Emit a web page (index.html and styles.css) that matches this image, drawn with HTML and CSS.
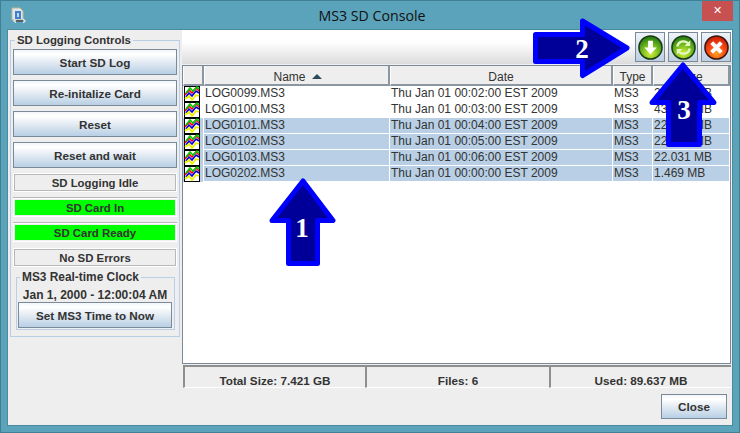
FILE: index.html
```html
<!DOCTYPE html>
<html lang="en">
<head>
<meta charset="utf-8">
<title>MS3 SD Console</title>
<link rel="stylesheet" href="styles.css">
</head>
<body>
<svg class="defs" width="0" height="0" aria-hidden="true">
  <defs>
    <radialGradient id="gGreen" cx="50%" cy="75%" r="75%">
      <stop offset="0" stop-color="#d8f03c"/><stop offset=".45" stop-color="#7cc020"/><stop offset="1" stop-color="#1c7410"/>
    </radialGradient>
    <radialGradient id="gRed" cx="50%" cy="75%" r="75%">
      <stop offset="0" stop-color="#ffa020"/><stop offset=".5" stop-color="#f84a10"/><stop offset="1" stop-color="#c81808"/>
    </radialGradient>
    <symbol id="chart" viewBox="0 0 16 16">
      <rect x=".5" y=".5" width="15" height="15" fill="#fff" stroke="#000"/>
      <path d="M1 9 5 4 8 7 12 2 15 5" fill="none" stroke="#f00" stroke-width="1.6"/>
      <path d="M2 7 6 2 9 5 13 1 15 3" fill="none" stroke="#0c0" stroke-width="1.6"/>
      <path d="M2 11 5 7 8 10 12 5 15 7" fill="none" stroke="#00d" stroke-width="1.6"/>
      <path d="M1 13 5 10 8 14 12 9 15 10" fill="none" stroke="#ee0" stroke-width="1.8"/>
    </symbol>
  </defs>
</svg>

<div class="window">
  <header class="titlebar">
    <svg class="app-icon" width="15" height="16" viewBox="0 0 15 16" aria-hidden="true">
      <path d="M1 1h8l3 3v9H1z" fill="#dfe6ee" stroke="#c2b68a"/>
      <rect x="4" y="4" width="6" height="8" fill="#3f7fd0"/>
      <path d="M6 6h2v4H6z" fill="#bcd8f4"/>
      <path d="M5 14h7" stroke="#55616a" stroke-width="2"/>
      <path d="M12 12l2 2-2 2" stroke="#dfe4e8" fill="none" stroke-width="1.4"/>
      <path d="M5 12.4l-2 1.6 2 1.6" stroke="#dfe4e8" fill="none" stroke-width="1.4"/>
    </svg>
    <div class="title">MS3 SD Console</div>
    <button class="win-close" type="button">✕</button>
  </header>

  <main class="client">
    <aside class="left">
      <fieldset class="group">
        <legend>SD Logging Controls</legend>
        <div class="stack">
          <button class="btn" type="button">Start SD Log</button>
          <button class="btn" type="button">Re-initalize Card</button>
          <button class="btn" type="button">Reset</button>
          <button class="btn" type="button">Reset and wait</button>
          <div class="labels">
            <div class="status">SD Logging Idle</div>
            <div class="status on">SD Card In</div>
            <div class="status on">SD Card Ready</div>
            <div class="status">No SD Errors</div>
          </div>
        </div>
        <fieldset class="group clock">
          <legend>MS3 Real-time Clock</legend>
          <div class="time">Jan 1, 2000 - 12:00:04 AM</div>
          <button class="btn" type="button">Set MS3 Time to Now</button>
        </fieldset>
      </fieldset>
    </aside>

    <section class="right">
      <div class="toolbar">
        <button class="tool" type="button" aria-label="Download">
          <svg width="25" height="25" viewBox="0 0 26 26"><circle cx="13" cy="13" r="12" fill="url(#gGreen)" stroke="#1a3a16" stroke-width="1.6"/><path d="M10.5 6h5v7h4L13 20l-6.500-7h4z" fill="#fff"/></svg>
        </button>
        <button class="tool" type="button" aria-label="Refresh">
          <svg width="25" height="25" viewBox="0 0 26 26"><circle cx="13" cy="13" r="12" fill="url(#gGreen)" stroke="#1a3a16" stroke-width="1.6"/><path d="M6.500 12A6.500 6.500 0 0 1 17.500 8.500" fill="none" stroke="#e4f6c0" stroke-width="2.400"/><path d="M20 5.500v6h-6z" fill="#e4f6c0"/><path d="M19.500 14A6.500 6.500 0 0 1 8.500 17.500" fill="none" stroke="#e4f6c0" stroke-width="2.400"/><path d="M6 20.500v-6h6z" fill="#e4f6c0"/></svg>
        </button>
        <button class="tool" type="button" aria-label="Delete">
          <svg width="25" height="25" viewBox="0 0 26 26"><circle cx="13" cy="13" r="12" fill="url(#gRed)" stroke="#3a1610" stroke-width="1.6"/><path d="M8 8l10 10M18 8 8 18" stroke="#fff" stroke-width="4.200"/></svg>
        </button>
      </div>

      <div class="scroll">
        <table class="files">
          <colgroup>
            <col class="c-icon"><col class="c-name"><col class="c-date"><col class="c-type"><col class="c-size">
          </colgroup>
          <thead>
            <tr><th></th><th class="name">Name<span class="sort"></span></th><th>Date</th><th>Type</th><th>Size</th></tr>
          </thead>
          <tbody>
            <tr><td class="ico"><svg width="16" height="16"><use href="#chart"/></svg></td><td>LOG0099.MS3</td><td>Thu Jan 01 00:02:00 EST 2009</td><td>MS3</td><td>22.031 MB</td></tr>
            <tr><td class="ico"><svg width="16" height="16"><use href="#chart"/></svg></td><td>LOG0100.MS3</td><td>Thu Jan 01 00:03:00 EST 2009</td><td>MS3</td><td>43.968 MB</td></tr>
            <tr class="sel"><td class="ico"><svg width="16" height="16"><use href="#chart"/></svg></td><td>LOG0101.MS3</td><td>Thu Jan 01 00:04:00 EST 2009</td><td>MS3</td><td>22.031 MB</td></tr>
            <tr class="sel"><td class="ico"><svg width="16" height="16"><use href="#chart"/></svg></td><td>LOG0102.MS3</td><td>Thu Jan 01 00:05:00 EST 2009</td><td>MS3</td><td>22.031 MB</td></tr>
            <tr class="sel"><td class="ico"><svg width="16" height="16"><use href="#chart"/></svg></td><td>LOG0103.MS3</td><td>Thu Jan 01 00:06:00 EST 2009</td><td>MS3</td><td>22.031 MB</td></tr>
            <tr class="sel"><td class="ico"><svg width="16" height="16"><use href="#chart"/></svg></td><td>LOG0202.MS3</td><td>Thu Jan 01 00:00:00 EST 2009</td><td>MS3</td><td>1.469 MB</td></tr>
          </tbody>
        </table>
      </div>

      <div class="summary">
        <div class="cell">Total Size: 7.421 GB</div>
        <div class="cell">Files: 6</div>
        <div class="cell">Used: 89.637 MB</div>
      </div>

      <div class="footer">
        <button class="btn close" type="button">Close</button>
      </div>
    </section>
  </main>

  <svg class="callouts" width="740" height="433" viewBox="0 0 740 433">
    <polygon class="arrow" points="303,181 333,220.500 317.500,220.500 317.500,263.500 288.500,263.500 288.500,220.500 272,220.500"/>
    <polygon class="arrow" points="535.500,34.500 582.500,34.500 582.500,21 627,48 582.500,75.500 582.500,61.500 535.500,61.500"/>
    <polygon class="arrow" points="683,65 714,102.500 699.500,102.500 699.500,144.500 668.500,144.500 668.500,102.500 652,102.500"/>
    <text class="num" x="302" y="237">1</text>
    <text class="num" x="582" y="58">2</text>
    <text class="num" x="684" y="119">3</text>
  </svg>
</div>
</body>
</html>
```

FILE: styles.css
```css
* { box-sizing: border-box; }

html, body {
  margin: 0;
  height: 100%;
}

body {
  background: #5ba3bb;
  font: 12px "Liberation Sans", Arial, sans-serif;
  color: #333;
  overflow: hidden;
}

.defs { position: absolute; }

.window {
  position: relative;
  width: 740px;
  height: 433px;
  padding: 0 8px 8px;
  display: flex;
  flex-direction: column;
  box-shadow: inset 0 0 0 1px #3f8095;
}

/* title bar */
.titlebar {
  height: 30px;
  flex: none;
  display: flex;
  align-items: flex-start;
  margin-right: -1px;
}

.app-icon {
  margin: 7px 0 0 3px;
  flex: none;
}

.title {
  flex: 1;
  text-align: center;
  font: 14.200px/31px "Open Sans", "Noto Sans", sans-serif;
  color: #111;
  padding-left: 16px;
}

.win-close {
  width: 31px;
  height: 20px;
  margin-top: 1px;
  border: 0;
  padding: 0;
  background: #c75050;
  color: #fff;
  font: bold 11px/20px "DejaVu Sans", sans-serif;
}

/* client */
.client {
  height: 395px;
  flex: none;
  display: flex;
  background: #eee;
  box-shadow: 0 0 0 1px #4b8ba0;
}

.left {
  width: 174px;
  flex: none;
  padding: 3px 0 0 2px;
}

fieldset.group {
  margin: 0;
  padding: 2px 2px 6px;
  min-width: 0;
  width: 170px;
  border: 1px solid #b8cfe5;
}

legend {
  padding: 0 2px;
  margin-left: 2px;
  font-weight: bold;
  font-size: 11.400px;
  line-height: 14px;
  color: #333;
}

.stack {
  display: flex;
  flex-direction: column;
  gap: 5px;
}

.labels {
  display: flex;
  flex-direction: column;
  gap: 6px;
}

.btn {
  display: block;
  width: 100%;
  height: 26px;
  padding: 0;
  border: 1px solid #7a8a99;
  background: linear-gradient(#f2f6fa 0%, #fff 18%, #dfe8f1 55%, #b8cfe5 100%);
  font: bold 11.700px "Liberation Sans", Arial, sans-serif;
  color: #333;
}

.status {
  height: 19px;
  text-align: center;
  font-weight: bold;
  font-size: 11.400px;
  line-height: 19px;
  background: #eee;
  border: 1px solid #fff;
  box-shadow: inset 0 0 0 1px #b8b8b8;
}

.status.on {
  background: #0f0;
  box-shadow: inset 0 0 0 1px #eee, 0 -1px 0 #b8b8b8;
  border-color: #fff;
}

fieldset.clock {
  width: auto;
  margin: 3px 2px 0 3px;
  padding: 0 2px 1px 1px;
}

.clock legend {
  margin-left: 2px;
  font-size: 11.900px;
}

.time {
  height: 18px;
  padding-top: 4px;
  text-align: center;
  font-weight: bold;
  line-height: 14px;
  white-space: nowrap;
}

/* right side */
.right {
  flex: 1;
  min-width: 0;
  display: flex;
  flex-direction: column;
  padding-right: 1px;
}

.toolbar {
  height: 34px;
  flex: none;
  display: flex;
  justify-content: flex-end;
  gap: 3px;
  padding: 2px 1px 0 0;
  margin-right: -1px;
  background: linear-gradient(#fff 0%, #fff 35%, #dcdcdc 100%);
}

.tool {
  width: 30px;
  height: 30px;
  padding: 0;
  display: flex;
  align-items: center;
  justify-content: center;
  border: 1px solid #7a8a99;
  background: linear-gradient(#eef3f8, #bdd0e3);
}

.scroll {
  flex: 1;
  margin-top: 1px;
  background: #fff;
  border: 1px solid #7a8a99;
}

.files {
  table-layout: fixed;
  width: 547px;
  border-collapse: separate;
  border-spacing: 0;
}

.c-icon { width: 21px; }
.c-name { width: 186px; }
.c-date { width: 223px; }
.c-type { width: 40px; }
.c-size { width: 77px; }

.files th {
  height: 20px;
  padding: 4px 0 0;
  background: #eee;
  font-weight: normal;
  text-align: center;
  border-right: 2px solid #8a97a3;
  border-bottom: 2px solid #8a97a3;
  border-left: 1px solid #fff;
}

.files th.name { padding-left: 2px; }

.sort {
  display: inline-block;
  margin-left: 6px;
  vertical-align: 2px;
  border-left: 5px solid transparent;
  border-right: 5px solid transparent;
  border-bottom: 5px solid #2c4a5c;
}

.files td {
  height: 16px;
  padding: 0 0 0 1px;
  line-height: 15px;
  white-space: nowrap;
  overflow: hidden;
  border-right: 1px solid #fff;
  border-bottom: 1px solid #fff;
}

.files .sel td { background: #b8cfe5; }

.files td.ico {
  padding: 0;
  line-height: 0;
  border-bottom: 0;
}

.ico svg { display: block; margin-left: 1px; }

.summary {
  height: 23px;
  flex: none;
  margin: 1px 0 0 1px;
  display: grid;
  grid-template-columns: 182px 184px 1fr;
  margin-right: 0;
}

.cell {
  text-align: center;
  font-weight: bold;
  font-size: 11.700px;
  line-height: 28px;
  overflow: hidden;
  border-top: 2px solid #8f8f8f;
  border-left: 2px solid #8f8f8f;
  border-bottom: 1px solid #fff;
}

.footer {
  height: 37px;
  flex: none;
  display: flex;
  justify-content: flex-end;
  padding: 6px 4px 0 0;
}

.btn.close {
  width: 66px;
  height: 25px;
}

/* callouts over the window */
.callouts {
  position: absolute;
  left: 0;
  top: 0;
  pointer-events: none;
}

.arrow {
  fill: #000099;
  stroke: #0000ff;
  stroke-width: 5;
  stroke-linejoin: round;
}

.num {
  fill: #fff;
  font: bold 27px "Liberation Serif", serif;
  text-anchor: middle;
}
```
